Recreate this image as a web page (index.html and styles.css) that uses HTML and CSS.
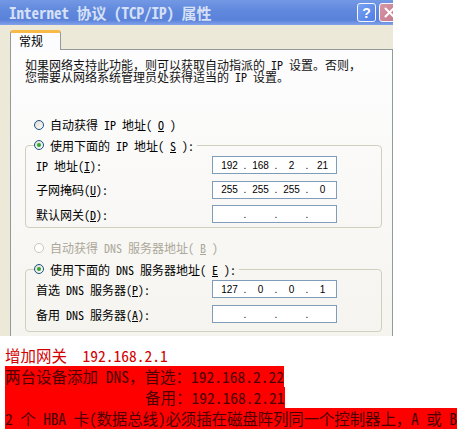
FILE: index.html
```html
<!DOCTYPE html>
<html lang="zh-CN">
<head>
  <meta charset="UTF-8">
  <title>Internet 协议 (TCP/IP) 属性</title>
  <link rel="stylesheet" href="styles.css">
</head>
<body>

<div class="dialog">
  <div class="titlebar">
    <span class="title">Internet 协议 (TCP/IP) 属性</span>
    <span class="tb-btn help">?</span>
    <span class="tb-btn close">
      <svg width="11" height="11" viewBox="0 0 11 11"><path d="M1.5 1.5 L9.5 9.5 M9.5 1.5 L1.5 9.5" stroke="#fff" stroke-width="2" stroke-linecap="round"/></svg>
    </span>
  </div>

  <div class="tabs">
    <div class="tab">常规</div>
  </div>

  <div class="panel">
    <p class="intro">如果网络支持此功能，则可以获取自动指派的 IP 设置。否则，<br>您需要从网络系统管理员处获得适当的 IP 设置。</p>

    <div class="radio first"><span class="dot"></span>自动获得 IP 地址(<u>O</u>)</div>

    <fieldset class="group ip-group">
      <legend><div class="radio"><span class="dot on"></span>使用下面的 IP 地址(<u>S</u>):</div></legend>
      <div class="row">
        <span class="label">IP 地址(<u>I</u>):</span>
        <div class="ip"><span class="seg">192</span><span class="sep">.</span><span class="seg">168</span><span class="sep">.</span><span class="seg">2</span><span class="sep">.</span><span class="seg">21</span></div>
      </div>
      <div class="row">
        <span class="label">子网掩码(<u>U</u>):</span>
        <div class="ip"><span class="seg">255</span><span class="sep">.</span><span class="seg">255</span><span class="sep">.</span><span class="seg">255</span><span class="sep">.</span><span class="seg">0</span></div>
      </div>
      <div class="row">
        <span class="label">默认网关(<u>D</u>):</span>
        <div class="ip"><span class="seg"></span><span class="sep">.</span><span class="seg"></span><span class="sep">.</span><span class="seg"></span><span class="sep">.</span><span class="seg"></span></div>
      </div>
    </fieldset>

    <div class="radio disabled dns-auto"><span class="dot"></span>自动获得 DNS 服务器地址(<u>B</u>)</div>

    <fieldset class="group dns-group">
      <legend><div class="radio"><span class="dot on"></span>使用下面的 DNS 服务器地址(<u>E</u>):</div></legend>
      <div class="row">
        <span class="label">首选 DNS 服务器(<u>P</u>):</span>
        <div class="ip"><span class="seg">127</span><span class="sep">.</span><span class="seg">0</span><span class="sep">.</span><span class="seg">0</span><span class="sep">.</span><span class="seg">1</span></div>
      </div>
      <div class="row">
        <span class="label">备用 DNS 服务器(<u>A</u>):</span>
        <div class="ip"><span class="seg"></span><span class="sep">.</span><span class="seg"></span><span class="sep">.</span><span class="seg"></span><span class="sep">.</span><span class="seg"></span></div>
      </div>
    </fieldset>
  </div>
</div>

<div class="notes">
  <div class="note plain">增加网关  192.168.2.1</div>
  <div class="note hl">两台设备添加 DNS，首选：192.168.2.22</div>
  <div class="note hl indent">备用：192.168.2.21</div>
  <div class="note hl long">2 个 HBA 卡(数据总线)必须插在磁盘阵列同一个控制器上，A 或 B</div>
</div>

</body>
</html>
```

FILE: styles.css
```css
* {
  box-sizing: border-box;
}

body {
  margin: 0;
  background: #fff;
  font-family: "Noto Sans Mono CJK SC", "Noto Sans CJK SC", sans-serif;
  font-size: 12px;
  color: #000;
}

.dialog {
  width: 393px;
  height: 336px;
  overflow: hidden;
  background: #ece9d8;
  display: flex;
  flex-direction: column;
}

/* title bar */
.titlebar {
  flex: none;
  height: 25px;
  display: flex;
  align-items: center;
  padding-left: 9px;
  background: linear-gradient(#7398e4, #5f87dc 45%, #5a82da 80%, #83a2ea);
}

.title {
  flex: 1;
  font-size: 15px;
  font-weight: bold;
  color: #d6e0f6;
  white-space: nowrap;
  line-height: 18px;
}

.tb-btn {
  flex: none;
  height: 19px;
  border: 1px solid #f4f6fc;
  border-radius: 3px;
  display: flex;
  align-items: center;
  justify-content: center;
}

.help {
  width: 19px;
  margin-right: 3px;
  background: linear-gradient(135deg, #7aa2f2, #4d7de6);
  color: #fff;
  font-family: "Liberation Sans", sans-serif;
  font-weight: bold;
  font-size: 14px;
}

.close {
  width: 21px;
  margin-right: -7px;
  background: linear-gradient(135deg, #d897a5, #c0778a);
}

/* tab strip */
.tabs {
  flex: none;
  height: 24px;
  display: flex;
  align-items: flex-end;
  padding-left: 10px;
}

.tab {
  position: relative;
  width: 51px;
  height: 20px;
  margin-bottom: -1px;
  padding: 1px 0 0 8px;
  background: #fcfcfe;
  border: 1px solid #919b9c;
  border-top: 3px solid #f8b946;
  border-bottom: none;
  border-radius: 3px 3px 0 0;
  line-height: 14px;
}

/* page */
.panel {
  flex: 1;
  margin-left: 10px;
  padding: 9px 10px 0 14px;
  border: 1px solid #919b9c;
  border-bottom: none;
  background: linear-gradient(#fdfdfe, #f5f4ef);
}

.intro {
  margin: 0;
  line-height: 12px;
  white-space: nowrap;
  color: #111;
}

.radio {
  display: flex;
  align-items: center;
  gap: 6px;
  height: 18px;
  white-space: nowrap;
}

.radio.first {
  margin: 32.5px 0 0 9px;
}

.radio.dns-auto {
  margin: 10.5px 0 0 9px;
}

.radio.disabled {
  color: #aca899;
}

.dot {
  position: relative;
  width: 10px;
  height: 10px;
  border-radius: 50%;
  border: 1px solid #1c5180;
  background: linear-gradient(135deg, #dcdad1, #fff);
}

.disabled .dot {
  border-color: #cac8bb;
  background: #fff;
}

.dot.on::after {
  content: "";
  position: absolute;
  left: 2px;
  top: 2px;
  width: 4px;
  height: 4px;
  border-radius: 50%;
  background: #2fa82f;
}

/* group boxes */
.group {
  margin: 2.5px 0 0 0;
  padding: 2px 10px 4px;
  border: 1px solid #d0d0bf;
  border-radius: 4px;
  display: flex;
  flex-direction: column;
  gap: 6.5px;
}

.group legend {
  margin-left: -2px;
  padding: 0 3px 0 0;
}

.dns-group {
  margin-top: 3.5px;
  gap: 7px;
  padding-bottom: 8px;
}

.row {
  display: flex;
  align-items: center;
  height: 18px;
}

.label {
  width: 176px;
  white-space: nowrap;
}

.ip {
  width: 125px;
  height: 18px;
  display: flex;
  align-items: center;
  padding-left: 4px;
  background: #fff;
  border: 1px solid #7f9db9;
  font-family: "Liberation Sans", sans-serif;
  font-size: 10px;
}

.seg {
  width: 25px;
  text-align: center;
}

.sep {
  width: 6px;
  text-align: center;
}

/* notes under the screenshot */
.notes {
  padding: 9px 0 0 5px;
  font-size: 15.5px;
  line-height: 21px;
}

.note {
  width: fit-content;
  white-space: pre;
}

.plain {
  color: #d40000;
}

.hl {
  background: #ff0000;
  color: #4a0000;
}

.indent {
  padding-left: 140px;
}

.long {
  letter-spacing: -0.15px;
}
```
